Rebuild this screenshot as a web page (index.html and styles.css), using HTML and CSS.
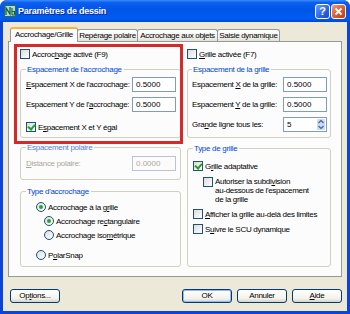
FILE: index.html
```html
<!DOCTYPE html>
<html lang="fr">

<head>
    <meta charset="UTF-8">
    <meta name="viewport" content="width=device-width, initial-scale=1.0">
    <title>Paramètres de dessin</title>
    <link rel="stylesheet" href="styles.css">
</head>

<body>
    <div class="window">
        <div class="titlebar">
            <svg class="app-icon" width="12" height="12" viewBox="0 0 12 12">
                <rect x="0.5" y="0.5" width="11" height="11" fill="#a8e0d0" stroke="#2b6a50" />
                <path d="M2 10 V3 L6 9 V2" fill="none" stroke="#1d5a3c" stroke-width="1.3" />
                <path d="M8 3 V10 M8 6.5 H10.5 V10 H8" fill="none" stroke="#1d5a3c" stroke-width="1.1" />
            </svg>
            <span class="title">Paramètres de dessin</span>
            <div class="caption-buttons">
                <span class="cap-btn help">?</span>
                <span class="cap-btn close">
                    <svg width="9" height="9" viewBox="0 0 9 9">
                        <path d="M1.5 1.5 L7.5 7.5 M7.5 1.5 L1.5 7.5" stroke="#fff" stroke-width="1.8" />
                    </svg>
                </span>
            </div>
        </div>

        <div class="client">
            <div class="tabs">
                <div class="tab active tab-grid">Accrochage/Grille</div>
                <div class="tab tab-polar">Repérage polaire</div>
                <div class="tab tab-osnap">Accrochage aux objets</div>
                <div class="tab tab-dyn">Saisie dynamique</div>
            </div>

            <div class="panel">
                <div class="col col-left">
                    <div class="check"><span class="box"></span><span>Accroc<u>h</u>age activé (F9)</span></div>

                    <div class="group group-snap">
                        <div class="group-title"><span>Espacement de l'accrochage</span></div>
                        <div class="field"><span><u>E</u>spacement X de l'accrochage:</span><span class="input">0.5000</span></div>
                        <div class="field gap5"><span>Espacement Y de l'<u>a</u>ccrochage:</span><span class="input">0.5000</span></div>
                        <div class="check gap10"><span class="box checked"></span><span>E<u>s</u>pacement X et Y égal</span></div>
                    </div>

                    <div class="group group-polar disabled">
                        <div class="group-title"><span>Espacement polaire</span></div>
                        <div class="field gap4"><span><u>D</u>istance polaire:</span><span class="input">0.0000</span></div>
                    </div>

                    <div class="group group-type">
                        <div class="group-title"><span>Type d'accrochage</span></div>
                        <div class="radio gap6 indent1"><span class="dot on"></span><span>Accrochage à la g<u>r</u>ille</span></div>
                        <div class="radio gap4 indent2"><span class="dot on"></span><span>Accrochage re<u>c</u>tangulaire</span></div>
                        <div class="radio gap4 indent2"><span class="dot"></span><span>Accrochage iso<u>m</u>étrique</span></div>
                        <div class="radio gap10 indent1"><span class="dot"></span><span>P<u>o</u>larSnap</span></div>
                    </div>

                    <div class="highlight"></div>
                </div>

                <div class="col col-right">
                    <div class="check"><span class="box"></span><span><u>G</u>rille activée (F7)</span></div>

                    <div class="group group-grid">
                        <div class="group-title"><span>Espacement de la grille</span></div>
                        <div class="field"><span>Espacement <u>X</u> de la grille:</span><span class="input">0.5000</span></div>
                        <div class="field gap5"><span>Espacement <u>Y</u> de la grille:</span><span class="input">0.5000</span></div>
                        <div class="field gap5"><span>Gra<u>n</u>de ligne tous les:</span><span class="input spin">5<span class="spinner"><svg width="6" height="11" viewBox="0 0 6 11"><path d="M0.5 4 L3 1.5 L5.5 4 M0.5 7 L3 9.5 L5.5 7" fill="none" stroke="#4d6185" stroke-width="1.2" /></svg></span></span></div>
                    </div>

                    <div class="group group-gridtype">
                        <div class="group-title"><span>Type de grille</span></div>
                        <div class="check gap8"><span class="box checked"></span><span>G<u>r</u>ille adaptative</span></div>
                        <div class="check multi gap6"><span class="box"></span><span>Autoriser la subdi<u>v</u>ision<br>au-dessous de l'espacement<br>de la grille</span></div>
                        <div class="check gap5"><span class="box"></span><span><u>A</u>fficher la grille au-delà des limites</span></div>
                        <div class="check gap5"><span class="box"></span><span>S<u>u</u>ivre le SCU dynamique</span></div>
                    </div>
                </div>
            </div>

            <div class="buttons">
                <div class="btn">Op<u>t</u>ions...</div>
                <div class="spacer"></div>
                <div class="btn default">OK</div>
                <div class="btn">Annuler</div>
                <div class="btn"><u>A</u>ide</div>
            </div>
        </div>
    </div>
</body>

</html>
```

FILE: styles.css
```css
* {
    box-sizing: border-box;
}

body {
    margin: 0;
    background: #ffffff;
    font-family: "Liberation Sans", Arial, sans-serif;
    font-size: 8px;
    letter-spacing: -0.3px;
    color: #000000;
}

u {
    text-decoration: underline;
    text-underline-offset: 1px;
}

.window {
    width: 350px;
    height: 314px;
    display: flex;
    flex-direction: column;
    background: #0a44d8;
    border-radius: 7px 7px 0 0;
    overflow: hidden;
}

/* title bar */

.titlebar {
    height: 22px;
    display: flex;
    align-items: center;
    padding: 0 4px;
    background: linear-gradient(#3f8cf8 0%, #0a5ef0 12%, #0055e6 45%, #005cf4 85%, #0046d2 100%);
}

.app-icon {
    flex: none;
}

.title {
    margin-left: 2px;
    color: #ffffff;
    font-weight: bold;
    font-size: 9px;
    letter-spacing: -0.25px;
    text-shadow: 1px 1px 0 #0a2a8a;
}

.caption-buttons {
    margin-left: auto;
    display: flex;
    gap: 1px;
}

.cap-btn {
    width: 15px;
    height: 15px;
    border: 1px solid #ffffff;
    border-radius: 3px;
    display: flex;
    align-items: center;
    justify-content: center;
    color: #ffffff;
    font-weight: bold;
    font-size: 11px;
    letter-spacing: 0;
}

.help {
    background: linear-gradient(135deg, #6a9ef8, #2a62e8 60%, #1a48c8);
}

.close {
    background: linear-gradient(135deg, #f09a78, #e05a2c 55%, #c13a10);
}

/* client area */

.client {
    flex: 1;
    margin: 0 3px 3px;
    padding: 5px 5px 0;
    background: #ece9d8;
}

.tabs {
    height: 14px;
    display: flex;
    align-items: flex-end;
    margin-left: 2px;
}

.tab {
    height: 12px;
    line-height: 11px;
    text-align: center;
    border: 1px solid #919b9c;
    border-bottom: none;
    border-radius: 3px 3px 0 0;
    margin-left: -1px;
    background: linear-gradient(#ffffff, #f0efe9 70%, #e3e1d6);
    white-space: nowrap;
}

.tab.active {
    height: 15px;
    line-height: 12px;
    margin-left: 0;
    margin-bottom: -1px;
    border-top: 2px solid #f5b53c;
    background: #fcfcfe;
    position: relative;
    z-index: 1;
}

.tab-grid {
    width: 68px;
}

.tab-polar {
    width: 61px;
}

.tab-osnap {
    width: 81px;
}

.tab-dyn {
    width: 63px;
}

.panel {
    height: 236px;
    border: 1px solid #919b9c;
    background: #fcfcfc;
    padding: 7px 10px 9px 11px;
    display: flex;
    gap: 6px;
    position: relative;
}

.col {
    display: flex;
    flex-direction: column;
}

.col-left {
    width: 161px;
}

.col-right {
    width: 144px;
}

/* group boxes */

.group {
    border: 1px solid #d0d0bf;
    border-radius: 3px;
    padding: 0 4px 5px 5px;
    margin-top: 10px;
}

.group-title {
    height: 9px;
    line-height: 9px;
    margin-top: -5px;
}

.group-title span {
    background: #fcfcfc;
    color: #0046d5;
    padding: 0 2px 0 1px;
}

.group-polar {
    margin-top: 9px;
    padding-bottom: 8px;
}

.group-type {
    margin-top: 11px;
    padding-bottom: 6px;
}

.col-right .group {
    padding: 0 3px 5px 4px;
}

.col-right .group-gridtype {
    margin-top: 10px;
    flex: 1;
    padding-left: 5px;
}

.disabled .group-title span {
    color: #5a82d8;
}

.disabled .field > span:first-child {
    color: #aca899;
}

.disabled .input {
    border-color: #b8c4d4;
    color: #aca899;
    background: #fbfbfb;
}

/* rows */

.field {
    height: 15px;
    display: flex;
    align-items: center;
    justify-content: space-between;
    margin-top: 3px;
    white-space: nowrap;
}

.input {
    width: 44px;
    height: 15px;
    border: 1px solid #7f9db9;
    background: #ffffff;
    padding-left: 3px;
    line-height: 13px;
    letter-spacing: 0;
    display: flex;
    align-items: center;
}

.spin {
    padding-right: 0;
    justify-content: space-between;
}

.spinner {
    width: 10px;
    height: 13px;
    background: #c9dafc;
    border: 1px solid #ffffff;
    border-radius: 2px;
    display: flex;
    align-items: center;
    justify-content: center;
}

.check,
.radio {
    height: 10px;
    display: flex;
    align-items: center;
    gap: 2px;
    white-space: nowrap;
}

.check.multi {
    height: 27px;
    align-items: flex-start;
    line-height: 9px;
    margin-left: 10px;
}

.box {
    flex: none;
    width: 10px;
    height: 10px;
    border: 1px solid #1c5180;
    background: linear-gradient(135deg, #dcdcd7, #ffffff);
    position: relative;
}

.box.checked::after {
    content: "";
    position: absolute;
    left: 2px;
    top: 0px;
    width: 3px;
    height: 5px;
    border: solid #21a121;
    border-width: 0 2px 2px 0;
    transform: rotate(40deg);
}

.dot {
    flex: none;
    width: 10px;
    height: 10px;
    border: 1px solid #1c5180;
    border-radius: 50%;
    background: linear-gradient(135deg, #dcdcd7, #ffffff);
    display: flex;
    align-items: center;
    justify-content: center;
}

.dot.on::after {
    content: "";
    width: 4px;
    height: 4px;
    border-radius: 50%;
    background: #2aa52a;
}

.indent1 {
    margin-left: 10px;
}

.indent2 {
    margin-left: 18px;
}

.gap4 {
    margin-top: 4px;
}

.gap5 {
    margin-top: 5px;
}

.gap6 {
    margin-top: 6px;
}

.gap8 {
    margin-top: 8px;
}

.gap10 {
    margin-top: 10px;
}

.highlight {
    position: absolute;
    left: 5px;
    top: 2px;
    width: 169px;
    height: 100px;
    border: 3px solid #d42a2a;
    pointer-events: none;
}

/* bottom buttons */

.buttons {
    display: flex;
    gap: 5px;
    margin-top: 12px;
    padding-left: 2px;
}

.spacer {
    flex: 1;
}

.btn {
    width: 50px;
    height: 14px;
    border: 1px solid #003c74;
    border-radius: 3px;
    background: linear-gradient(#ffffff, #f3f2ec 70%, #d8d3c8);
    text-align: center;
    line-height: 12px;
}

.btn.default {
    box-shadow: inset 0 0 0 1px #98b8f4;
}
```
